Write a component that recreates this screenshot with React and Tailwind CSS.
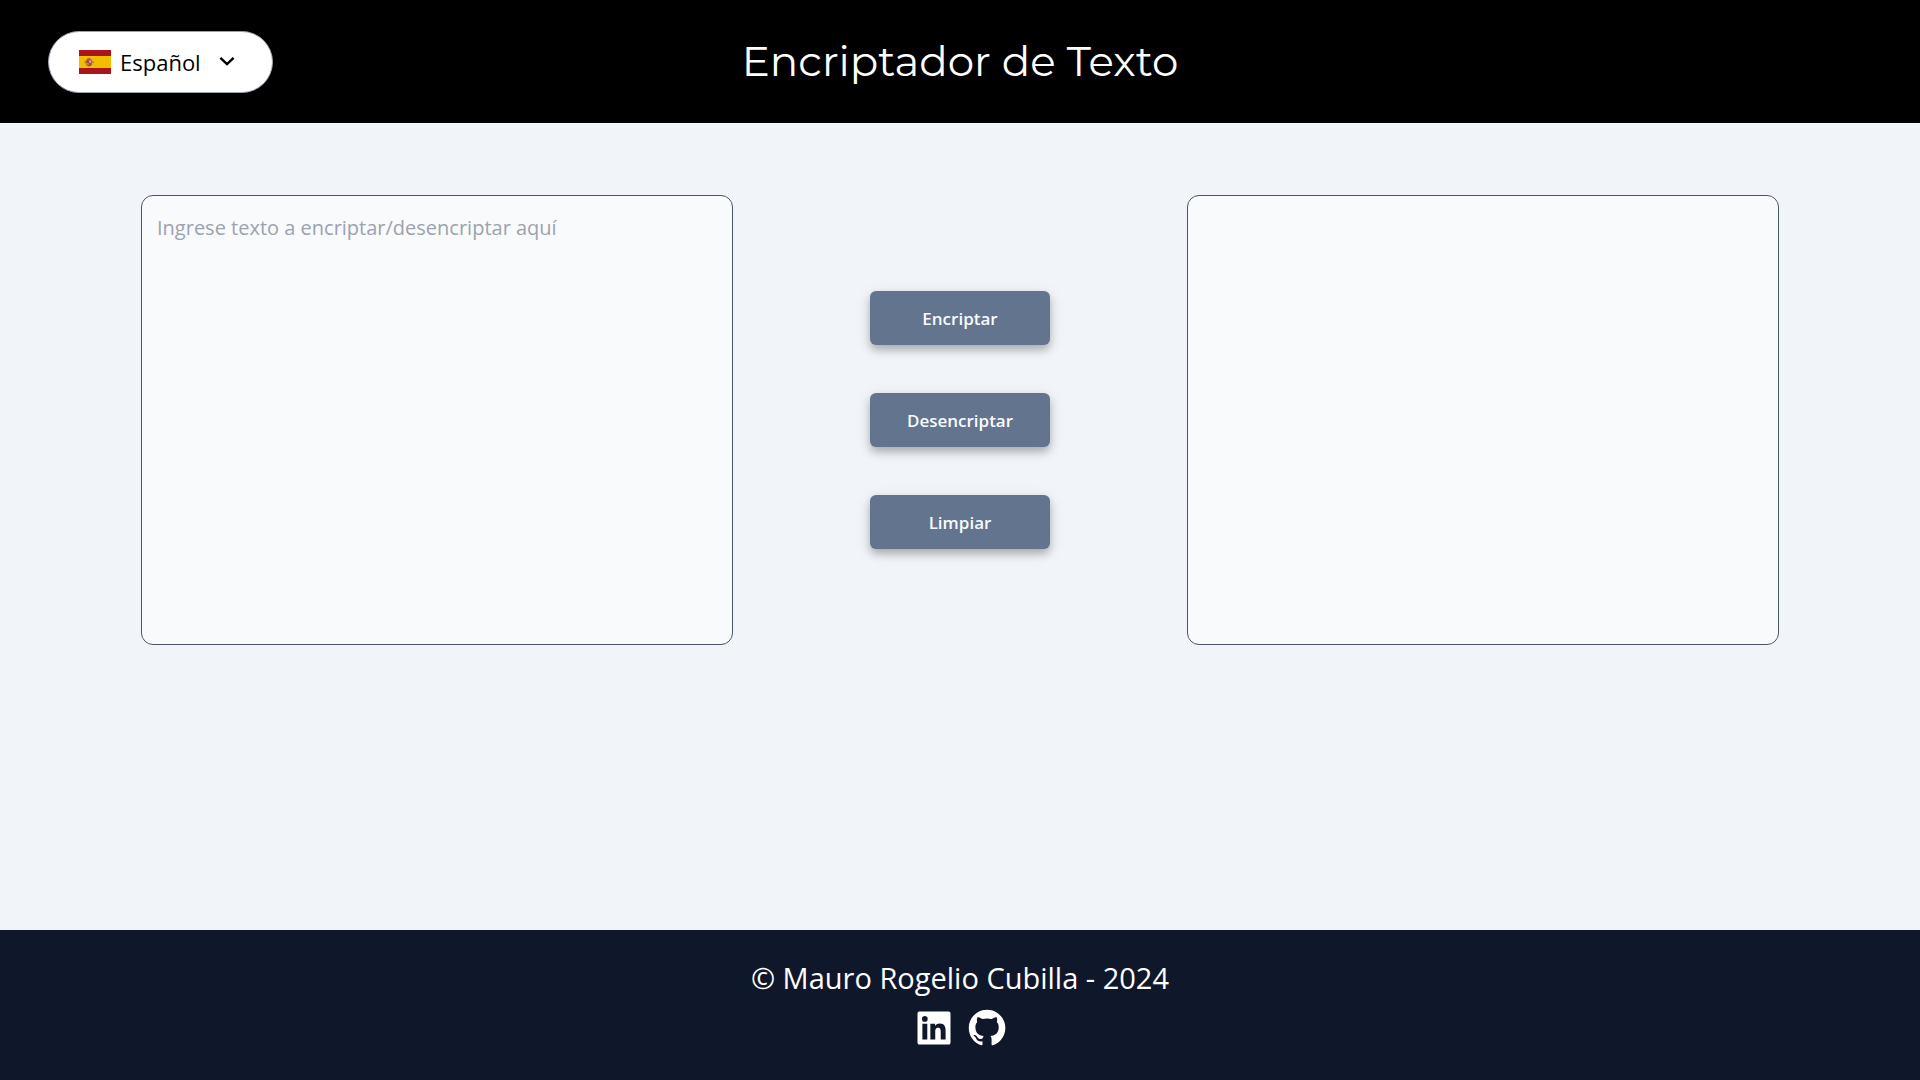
import { useState } from "react";
import { BiLogoGithub, BiLogoLinkedinSquare } from "react-icons/bi";

function SpainFlag() {
  return (
    <svg viewBox="0 0 32 24" className="h-6 w-8 shrink-0" aria-hidden="true">
      <rect width="32" height="24" fill="#aa151b" />
      <rect y="6" width="32" height="12" fill="#f1bf00" />
      <rect x="5.8" y="9" width="1" height="6.5" fill="#c9a878" />
      <rect x="13.4" y="9" width="1" height="6.5" fill="#c9a878" />
      <rect x="5.4" y="11.5" width="1.8" height="1.2" fill="#b8602a" />
      <rect x="13" y="11.5" width="1.8" height="1.2" fill="#b8602a" />
      <path d="M7.6 9Q10 6.8 12.4 9L12 10H8Z" fill="#b8602a" />
      <path d="M7.2 10h5.6v4.2q0 2-2.8 2.2q-2.8-.2-2.8-2.2z" fill="#b04a2c" />
      <rect x="10" y="10.4" width="2.2" height="2.4" fill="#cfa6b0" />
      <rect x="7.8" y="13" width="2" height="1.8" fill="#d9902a" />
      <circle cx="10" cy="12.9" r=".6" fill="#6a6488" />
    </svg>
  );
}

function ActionButton({ children, onClick }) {
  return (
    <button
      type="button"
      onClick={onClick}
      className="h-[54px] w-[180px] rounded-md bg-slate-500 pt-0.5 text-[17px] font-semibold text-slate-50 shadow-[0_5px_9px_rgba(0,0,0,0.26),0_3px_18px_rgba(0,0,0,0.07)]"
    >
      {children}
    </button>
  );
}

const pairs = [
  ["e", "enter"],
  ["i", "imes"],
  ["a", "ai"],
  ["o", "ober"],
  ["u", "ufat"],
];

const encrypt = (text) =>
  text.replace(/[eiaou]/g, (c) => pairs.find(([key]) => key === c)[1]);

const decrypt = (text) =>
  pairs.reduce((acc, [key, value]) => acc.replaceAll(value, key), text);

const boxClass =
  "block h-[450px] w-full min-w-0 flex-1 resize-none rounded-xl border border-gray-600 bg-slate-50 px-[15px] py-4 text-xl leading-8 text-slate-900 outline-none placeholder:text-[#9ca3af]";

export default function App() {
  const [input, setInput] = useState("");
  const [output, setOutput] = useState("");

  return (
    <div className="flex min-h-screen flex-col bg-slate-100 font-['Segoe_UI','Open_Sans',sans-serif]">
      <header className="grid grid-cols-[1fr_auto_1fr] items-center bg-black px-12 pt-[31px] pb-[30px]">
        <button
          type="button"
          aria-haspopup="listbox"
          className="flex h-[62px] w-[225px] items-center rounded-full border border-gray-400 bg-white pl-[30px] text-[22px] text-black"
        >
          <SpainFlag />
          <span className="ml-[9px]">Español</span>
          <svg
            viewBox="0 0 16 16"
            className="ml-[18px] h-4 w-4"
            fill="none"
            stroke="currentColor"
            strokeWidth="2.4"
            aria-hidden="true"
          >
            <path d="M1.4 3.8L8 10.2L14.6 3.8" />
          </svg>
        </button>
        <h1 className="pb-0.5 font-[Montserrat,Inter,sans-serif] text-[42px] leading-[60px] text-white">
          Encriptador de Texto
        </h1>
      </header>

      <main className="flex flex-1 items-start gap-[137px] px-[141px] pt-[72px]">
        <textarea
          aria-label="Texto"
          placeholder="Ingrese texto a encriptar/desencriptar aquí"
          value={input}
          onChange={(e) => setInput(e.target.value)}
          className={boxClass}
        />
        <div className="flex h-[450px] flex-col items-center justify-center gap-12">
          <ActionButton onClick={() => setOutput(encrypt(input))}>Encriptar</ActionButton>
          <ActionButton onClick={() => setOutput(decrypt(input))}>Desencriptar</ActionButton>
          <ActionButton
            onClick={() => {
              setInput("");
              setOutput("");
            }}
          >
            Limpiar
          </ActionButton>
        </div>
        <textarea aria-label="Resultado" readOnly value={output} className={boxClass} />
      </main>

      <footer className="flex flex-col items-center bg-slate-900 pt-7 pb-[30px] text-white">
        <p className="text-[29px] leading-10">© Mauro Rogelio Cubilla - 2024</p>
        <div className="mt-2 flex gap-[9px] text-[44px] leading-none">
          <a href="#linkedin" aria-label="LinkedIn">
            <BiLogoLinkedinSquare />
          </a>
          <a href="#github" aria-label="GitHub">
            <BiLogoGithub />
          </a>
        </div>
      </footer>
    </div>
  );
}
